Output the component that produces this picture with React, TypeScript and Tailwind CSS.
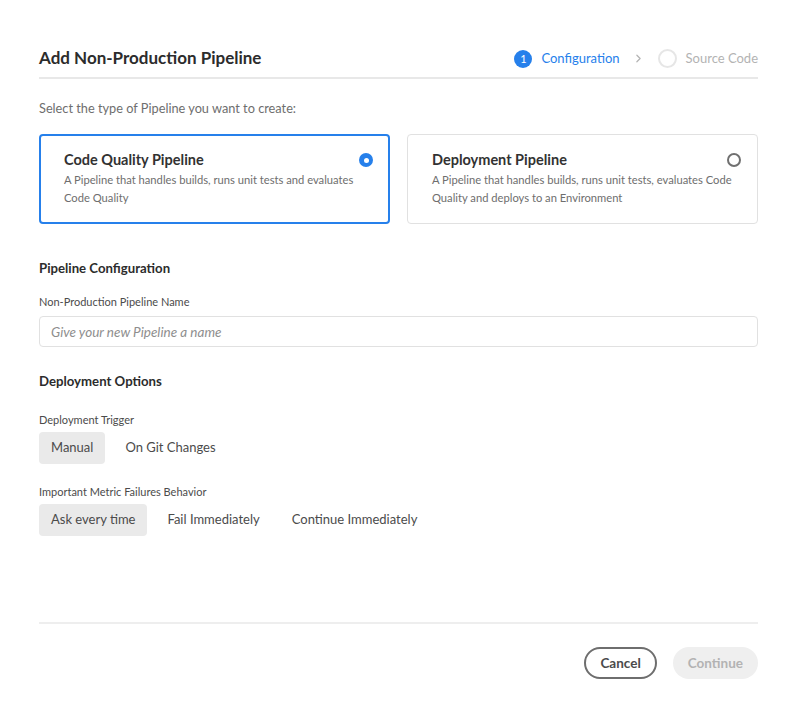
import { ChevronRight } from "lucide-react";

const Radio = ({ checked }: { checked: boolean }) =>
  checked ? (
    <span className="flex size-[14px] items-center justify-center rounded-full bg-[#2680eb]">
      <span className="size-[5px] rounded-full bg-white" />
    </span>
  ) : (
    <span className="size-[14px] rounded-full border-2 border-[#707070]" />
  );

const PipelineCard = ({
  title,
  text,
  selected,
}: {
  title: string;
  text: string;
  selected: boolean;
}) => (
  <div
    className={
      selected
        ? "flex-1 h-[90px] rounded-[4px] border-2 border-[#2680eb] pl-[23px] pr-[15px] pt-[14px]"
        : "flex-1 h-[90px] rounded-[4px] border border-[#e1e1e1] pl-[24px] pr-[16px] pt-[15px]"
    }
  >
    <div className="flex h-[20px] items-center justify-between">
      <span className="text-[14.5px] font-bold leading-[20px] text-[#323232]">{title}</span>
      <Radio checked={selected} />
    </div>
    <p className="mt-[1px] text-[11.2px] leading-[18px] text-[#6e6e6e]">{text}</p>
  </div>
);

const Segment = ({ label, active }: { label: string; active?: boolean }) => (
  <button
    className={
      active
        ? "h-[32px] rounded-[4px] bg-[#eaeaea] px-[12px] text-[13px] text-[#4b4b4b]"
        : "h-[32px] rounded-[4px] px-[12px] text-[13px] text-[#4b4b4b]"
    }
  >
    {label}
  </button>
);

export default function App() {
  return (
    <div
      className="min-h-[712px] w-[797px] bg-white px-[39px] pt-[44px] text-[#323232]"
      style={{ fontFamily: "Lato, sans-serif" }}
    >
      <header className="flex h-[35px] items-start justify-between border-b-2 border-[#e8e8e8]">
        <h1 className="text-[17px] font-bold leading-[28px] text-[#2c2c2c]">
          Add Non-Production Pipeline
        </h1>
        <div className="flex h-[28px] items-center pt-[1px] text-[13px]">
          <span className="flex size-[18px] items-center justify-center rounded-full bg-[#2680eb] text-[11px] leading-none text-white">
            1
          </span>
          <span className="ml-[9px] text-[#2680eb]">Configuration</span>
          <ChevronRight className="ml-[12px] size-[13px] text-[#b3b3b3]" strokeWidth={2.25} />
          <span className="ml-[13px] size-[19px] rounded-full border-2 border-[#e6e6e6]" />
          <span className="ml-[9px] text-[#b3b3b3]">Source Code</span>
        </div>
      </header>

      <p className="mt-[19px] text-[12.75px] leading-[20px] text-[#6e6e6e]">
        Select the type of Pipeline you want to create:
      </p>

      <div className="mt-[16px] flex gap-[17px]">
        <PipelineCard
          selected
          title="Code Quality Pipeline"
          text="A Pipeline that handles builds, runs unit tests and evaluates Code Quality"
        />
        <PipelineCard
          selected={false}
          title="Deployment Pipeline"
          text="A Pipeline that handles builds, runs unit tests, evaluates Code Quality and deploys to an Environment"
        />
      </div>

      <h2 className="mt-[34px] text-[13.2px] font-bold leading-[20px] text-[#2c2c2c]">Pipeline Configuration</h2>
      <label className="mt-[16px] block text-[11px] leading-[16px] text-[#4b4b4b]">
        Non-Production Pipeline Name
      </label>
      <input
        className="mt-[6px] h-[31px] w-full rounded-[4px] border border-[#e1e1e1] px-[11px] text-[13.5px] italic placeholder:text-[#8e8e8e] outline-none"
        placeholder="Give your new Pipeline a name"
      />

      <h2 className="mt-[24px] text-[13.2px] font-bold leading-[20px] text-[#2c2c2c]">Deployment Options</h2>
      <div className="mt-[21px] text-[11px] leading-[16px] text-[#4b4b4b]">Deployment Trigger</div>
      <div className="mt-[4px] flex gap-[8px]">
        <Segment label="Manual" active />
        <Segment label="On Git Changes" />
      </div>

      <div className="mt-[20px] text-[11px] leading-[16px] text-[#4b4b4b]">Important Metric Failures Behavior</div>
      <div className="mt-[4px] flex gap-[8px]">
        <Segment label="Ask every time" active />
        <Segment label="Fail Immediately" />
        <Segment label="Continue Immediately" />
      </div>

      <div className="mt-[86px] border-t-2 border-[#eeeeee]" />
      <div className="mt-[23px] flex justify-end gap-[16px]">
        <button className="h-[32px] rounded-full border-2 border-[#6e6e6e] px-[14px] text-[13.5px] font-bold text-[#4b4b4b]">
          Cancel
        </button>
        <button className="h-[32px] rounded-full bg-[#efefef] px-[15px] text-[13.5px] font-bold text-[#b3b3b3]">
          Continue
        </button>
      </div>
    </div>
  );
}
